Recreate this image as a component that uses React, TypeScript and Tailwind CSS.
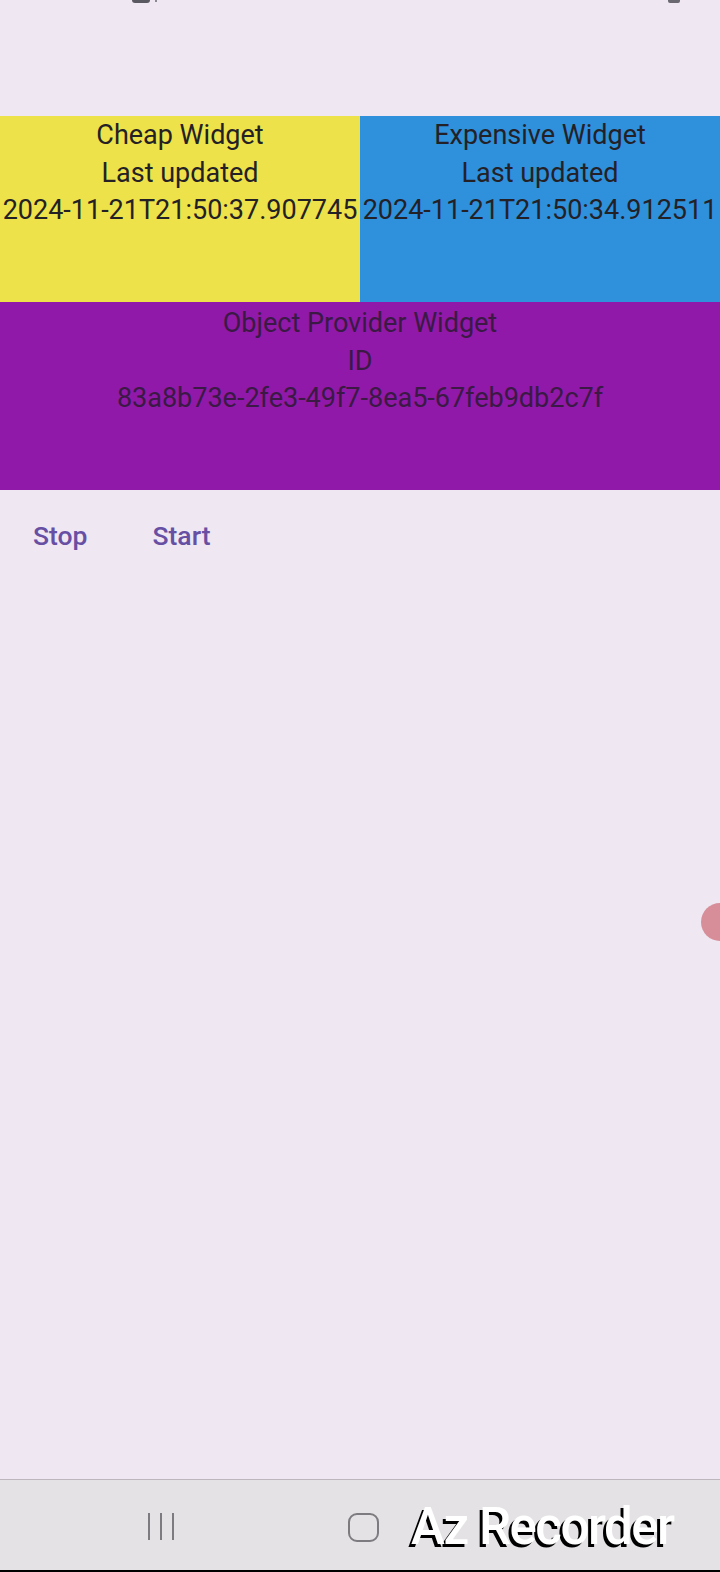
import { useState } from 'react'

const font = { fontFamily: 'Roboto, "Noto Sans", sans-serif' }

function InfoBox({ lines, className }: { lines: string[]; className: string }) {
  return (
    <div className={`flex flex-col items-center text-[27px] leading-[37.5px] ${className}`}>
      {lines.map((line, i) => (
        <div key={i} className="whitespace-nowrap">{line}</div>
      ))}
    </div>
  )
}

export default function App() {
  const [running, setRunning] = useState(true)

  return (
    <div style={font} className="relative w-[720px] h-[1572px] overflow-hidden bg-[#efe7f2] flex flex-col">
      {/* status bar, mostly cut off */}
      <div className="h-[116px] flex items-start">
        <div className="ml-[132px] w-[18px] h-[3px] rounded-b-[3px] bg-[#5a5860]" />
        <div className="ml-[5px] w-[2px] h-[2px] bg-[#8a8890]" />
        <div className="ml-auto mr-[40px] w-[12px] h-[3px] rounded-b-[2px] bg-[#6a6870]" />
      </div>

      {/* cheap / expensive widgets */}
      <div className="grid grid-cols-2 h-[186px]">
        <InfoBox className="pt-[1px] bg-[#ede249] text-[#242126]" lines={['Cheap Widget', 'Last updated', '2024-11-21T21:50:37.907745']} />
        <InfoBox className="pt-[1px] bg-[#2f90dc] text-[#242126]" lines={['Expensive Widget', 'Last updated', '2024-11-21T21:50:34.912511']} />
      </div>

      {/* object provider */}
      <InfoBox
        className="h-[188px] pt-[3px] bg-[#9119a9] text-[#3a1a44]"
        lines={['Object Provider Widget', 'ID', '83a8b73e-2fe3-49f7-8ea5-67feb9db2c7f']}
      />

      {/* buttons */}
      <div className="flex items-start pt-[32px] pl-[33px] gap-[65px] text-[26.5px] leading-[28px] font-medium text-[#6750a4]">
        <button onClick={() => setRunning(false)} className={running ? '' : 'opacity-90'}>Stop</button>
        <button onClick={() => setRunning(true)}>Start</button>
      </div>

      <div className="flex-1" />

      {/* navigation bar */}
      <div className="h-[91px] border-t border-[#bdb6bd] bg-[#e4e2e4] flex items-center">
        <div className="ml-[148px] flex gap-[10px] h-[27px] mt-[3px]">
          <div className="w-[2px] bg-[#7d7b80]" />
          <div className="w-[2px] bg-[#7d7b80]" />
          <div className="w-[2px] bg-[#7d7b80]" />
        </div>
        <div className="ml-[174px] mt-[4px] w-[31px] h-[29px] rounded-[9px] border-[2.5px] border-[#7d7b80]" />
        <div className="ml-[32px] mt-[2px] text-[51px] leading-none font-medium tracking-[-1.5px] text-white [text-shadow:-3px_3px_0_#000]">
          Az Recorder
        </div>
      </div>
      <div className="h-[2px] bg-black" />

      {/* floating recorder bubble */}
      <div className="absolute left-[701px] top-[903px] w-[38px] h-[38px] rounded-full bg-[#d4848f]/90" />
    </div>
  )
}
